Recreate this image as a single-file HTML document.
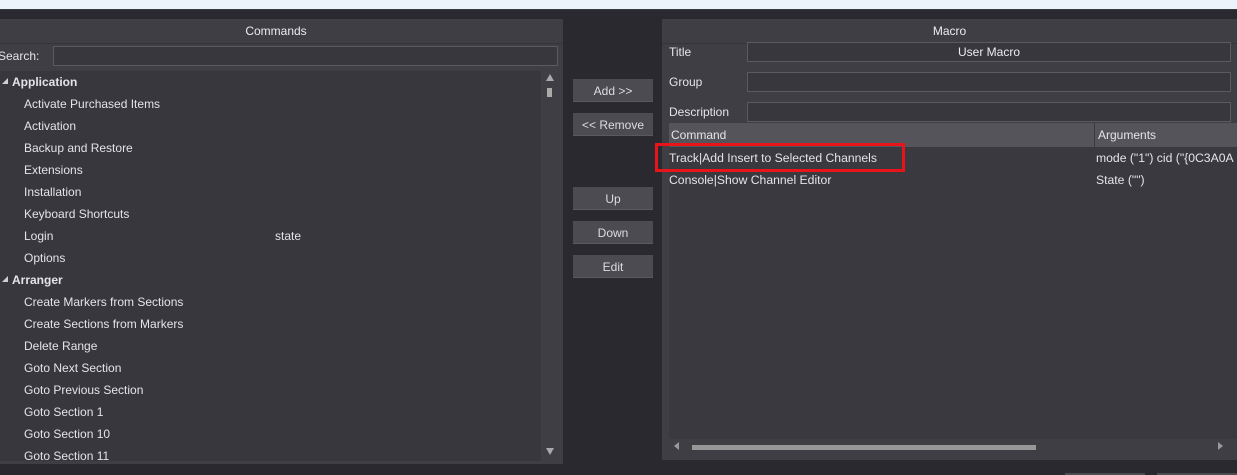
<!DOCTYPE html>
<html><head><style>
*{margin:0;padding:0;box-sizing:border-box}
body{width:1237px;height:475px;background:#2a292f;position:relative;overflow:hidden;font-family:"Liberation Sans",Arial,sans-serif;font-size:12px;color:#e4e4e8}
.a{position:absolute}
.hdr{text-align:center;line-height:24px;color:#ececf0}
.btn{position:absolute;left:573px;width:80px;height:23px;background:#4c4b52;border-bottom:1px solid #5a5960;color:#dcdce0;text-align:center;line-height:24px}
.it{position:absolute;left:24px;white-space:nowrap}
.cat{position:absolute;left:12px;font-weight:bold;white-space:nowrap}
.tri{position:absolute;left:2px;width:0;height:0;border-left:6px solid transparent;border-bottom:6px solid #d0d0d4}
.fld{position:absolute;border:1px solid #5b5a61;background:#38373d}
.r{font-size:12.2px}
</style></head><body>
<div class="a" style="left:0;top:0;width:1237px;height:9px;background:#ecf3fa"></div>
<div class="a" style="left:0;top:9px;width:1237px;height:1px;background:#3a3940"></div>

<div class="a" style="left:0;top:19px;width:563px;height:445px;background:#3f3e45"></div>
<div class="a hdr" style="left:0;top:19px;width:552px;height:24px">Commands</div>
<div class="a" style="left:0;top:43px;width:563px;height:1px;background:#35343a"></div>
<div class="a" style="left:-2px;top:49px">Search:</div>
<div class="fld" style="left:53px;top:46px;width:505px;height:20px"></div>
<div class="a" style="left:0;top:71px;width:541px;height:390px;background:#38373d"></div>
<div class="a" style="left:546px;top:74px;width:0;height:0;border-left:4px solid transparent;border-right:4px solid transparent;border-bottom:7px solid #aaa"></div>
<div class="a" style="left:547px;top:88px;width:5px;height:9px;background:#aaa"></div>
<div class="a" style="left:546px;top:448px;width:0;height:0;border-left:4px solid transparent;border-right:4px solid transparent;border-top:7px solid #aaa"></div>

<div class="tri" style="top:78px"></div><div class="cat" style="top:75px">Application</div>
<div class="it" style="top:97px">Activate Purchased Items</div>
<div class="it" style="top:119px">Activation</div>
<div class="it" style="top:141px">Backup and Restore</div>
<div class="it" style="top:163px">Extensions</div>
<div class="it" style="top:185px">Installation</div>
<div class="it" style="top:207px">Keyboard Shortcuts</div>
<div class="it" style="top:229px">Login</div><div class="a" style="left:275px;top:229px">state</div>
<div class="it" style="top:251px">Options</div>
<div class="tri" style="top:276px"></div><div class="cat" style="top:273px">Arranger</div>
<div class="it" style="top:295px">Create Markers from Sections</div>
<div class="it" style="top:317px">Create Sections from Markers</div>
<div class="it" style="top:339px">Delete Range</div>
<div class="it" style="top:361px">Goto Next Section</div>
<div class="it" style="top:383px">Goto Previous Section</div>
<div class="it" style="top:405px">Goto Section 1</div>
<div class="it" style="top:427px">Goto Section 10</div>
<div class="it" style="top:449px">Goto Section 11</div>

<div class="btn" style="top:79px">Add &gt;&gt;</div>
<div class="btn" style="top:113px">&lt;&lt; Remove</div>
<div class="btn" style="top:187px">Up</div>
<div class="btn" style="top:221px">Down</div>
<div class="btn" style="top:255px">Edit</div>

<div class="a" style="left:662px;top:19px;width:575px;height:441px;background:#3f3e45"></div>
<div class="a hdr" style="left:662px;top:19px;width:575px;height:24px">Macro</div>
<div class="a" style="left:662px;top:43px;width:575px;height:1px;background:#35343a"></div>
<div class="a" style="left:669px;top:45px">Title</div>
<div class="fld" style="left:747px;top:42px;width:484px;height:20px;text-align:center;line-height:18px;color:#ececf0">User Macro</div>
<div class="a" style="left:669px;top:75px">Group</div>
<div class="fld" style="left:747px;top:72px;width:484px;height:20px"></div>
<div class="a" style="left:669px;top:105px">Description</div>
<div class="fld" style="left:747px;top:102px;width:484px;height:20px"></div>
<div class="a" style="left:669px;top:123px;width:568px;height:316px;background:#3a393f"></div>
<div class="a" style="left:669px;top:123px;width:425px;height:24px;background:#55545b"></div>
<div class="a" style="left:1095px;top:123px;width:142px;height:24px;background:#55545b"></div>
<div class="a" style="left:671px;top:128px">Command</div>
<div class="a" style="left:1098px;top:128px">Arguments</div>
<div class="a r" style="left:669px;top:151px">Track|Add Insert to Selected Channels</div>
<div class="a r" style="left:1096px;top:151px;white-space:nowrap">mode ("1") cid ("{0C3A0A</div>
<div class="a r" style="left:669px;top:173px">Console|Show Channel Editor</div>
<div class="a r" style="left:1096px;top:173px">State ("")</div>
<div class="a" style="left:656px;top:144px;width:248px;height:27px;border:2px solid #e8141a;outline:0.5px solid #e8141a"></div>
<div class="a" style="left:674px;top:442px;width:0;height:0;border-top:4px solid transparent;border-bottom:4px solid transparent;border-right:5px solid #999"></div>
<div class="a" style="left:692px;top:445px;width:344px;height:5px;background:#979797"></div>
<div class="a" style="left:1218px;top:442px;width:0;height:0;border-top:4px solid transparent;border-bottom:4px solid transparent;border-left:5px solid #999"></div>
<div class="a" style="left:1065px;top:473px;width:80px;height:2px;background:#4c4b52"></div>
<div class="a" style="left:1157px;top:473px;width:80px;height:2px;background:#4c4b52"></div>
</body></html>
